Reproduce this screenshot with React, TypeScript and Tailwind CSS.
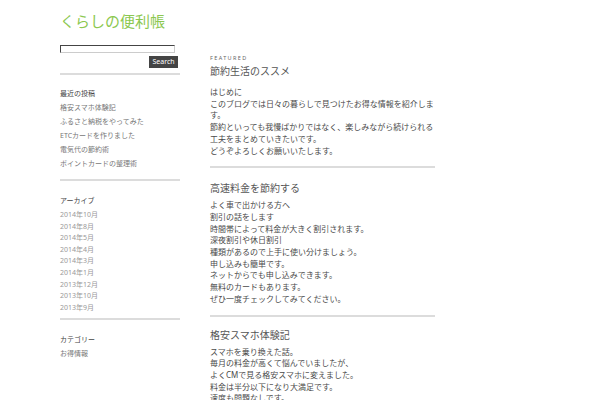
import React from 'react'

const recentPosts = [
  '格安スマホ体験記',
  'ふるさと納税をやってみた',
  'ETCカードを作りました',
  '電気代の節約術',
  'ポイントカードの整理術',
]

const archives = [
  '2014年10月',
  '2014年8月',
  '2014年5月',
  '2014年4月',
  '2014年3月',
  '2014年1月',
  '2013年12月',
  '2013年10月',
  '2013年9月',
]

const posts = [
  {
    title: '節約生活のススメ',
    gap: 'mt-[8px]',
    lines: [
      'はじめに',
      'このブログでは日々の暮らしで見つけたお得な情報を紹介します。',
      '節約といっても我慢ばかりではなく、楽しみながら続けられる工夫をまとめていきたいです。',
      'どうぞよろしくお願いいたします。',
    ],
  },
  {
    title: '高速料金を節約する',
    gap: 'mt-[4px]',
    lines: [
      'よく車で出かける方へ',
      '割引の話をします',
      '時間帯によって料金が大きく割引されます。',
      '深夜割引や休日割引',
      '種類があるので上手に使い分けましょう。',
      '申し込みも簡単です。',
      'ネットからでも申し込みできます。',
      '無料のカードもあります。',
      'ぜひ一度チェックしてみてください。',
    ],
  },
  {
    title: '格安スマホ体験記',
    gap: 'mt-[4px]',
    lines: [
      'スマホを乗り換えた話。',
      '毎月の料金が高くて悩んでいましたが、',
      'よくCMで見る格安スマホに変えました。',
      '料金は半分以下になり大満足です。',
      '速度も問題なしです。',
    ],
  },
]

const Rule: React.FC = () => <div className="h-[2px] w-full bg-[#dcdcdc]" />

const App: React.FC = () => {
  return (
    <div className="h-[400px] w-[600px] overflow-hidden bg-white font-['Noto_Sans','Noto_Sans_CJK_JP',sans-serif]">
      <header className="pl-[60px] pt-[10px]">
        <h1 className="text-[15px] leading-[22px] text-[#8cc850]">くらしの便利帳</h1>
      </header>

      <div className="mt-[13px] flex items-start gap-[30px] pl-[60px]">
        {/* sidebar */}
        <aside className="w-[120px]">
          <input
            type="text"
            className="block h-[8px] w-[115px] border border-b-[#ccc] border-l-[#444] border-r-[#ccc] border-t-[#444] bg-white"
          />
          <div className="mt-[3px] flex justify-end pr-[2px]">
            <button className="h-[12px] w-[29px] bg-[#444] text-[7px] leading-[12px] text-white">
              Search
            </button>
          </div>
          <div className="mt-[5px]">
            <Rule />
          </div>

          <h3 className="mt-[12px] text-[7px] leading-[14px] text-[#444]">最近の投稿</h3>
          <ul>
            {recentPosts.map((p) => (
              <li key={p} className="text-[7px] leading-[14px] text-[#777]">
                {p}
              </li>
            ))}
          </ul>
          <div className="mt-[8px]">
            <Rule />
          </div>

          <h3 className="mt-[13px] text-[7px] leading-[14px] text-[#444]">アーカイブ</h3>
          <ul className="mt-[1px]">
            {archives.map((a) => (
              <li key={a} className="text-[7px] leading-[11.6px] text-[#999]">
                {a}
              </li>
            ))}
          </ul>
          <div className="mt-[5px]">
            <Rule />
          </div>

          <h3 className="mt-[13px] text-[7px] leading-[14px] text-[#444]">カテゴリー</h3>
          <ul>
            <li className="text-[7px] leading-[14px] text-[#777]">お得情報</li>
          </ul>
        </aside>

        {/* main */}
        <main className="mt-[9px] w-[225px]">
          <div className="text-[5.5px] leading-[8px] tracking-[0.25em] text-[#666]">FEATURED</div>
          {posts.map((post, i) => (
            <article key={post.title}>
              {i > 0 && (
                <div className="mt-[10px]">
                  <Rule />
                </div>
              )}
              <h2
                className={
                  i === 0
                    ? 'mt-[2px] text-[10px] leading-[14px] text-[#555]'
                    : i === 1
                      ? 'mt-[13px] text-[10px] leading-[14px] text-[#555]'
                      : 'mt-[11px] text-[10px] leading-[14px] text-[#555]'
                }
              >
                {post.title}
              </h2>
              <div className={post.gap}>
                {post.lines.map((line) => (
                  <p key={line} className="text-[8px] leading-[11.7px] text-[#4a4a4a]">
                    {line}
                  </p>
                ))}
              </div>
            </article>
          ))}
        </main>
      </div>
    </div>
  )
}

export default App
